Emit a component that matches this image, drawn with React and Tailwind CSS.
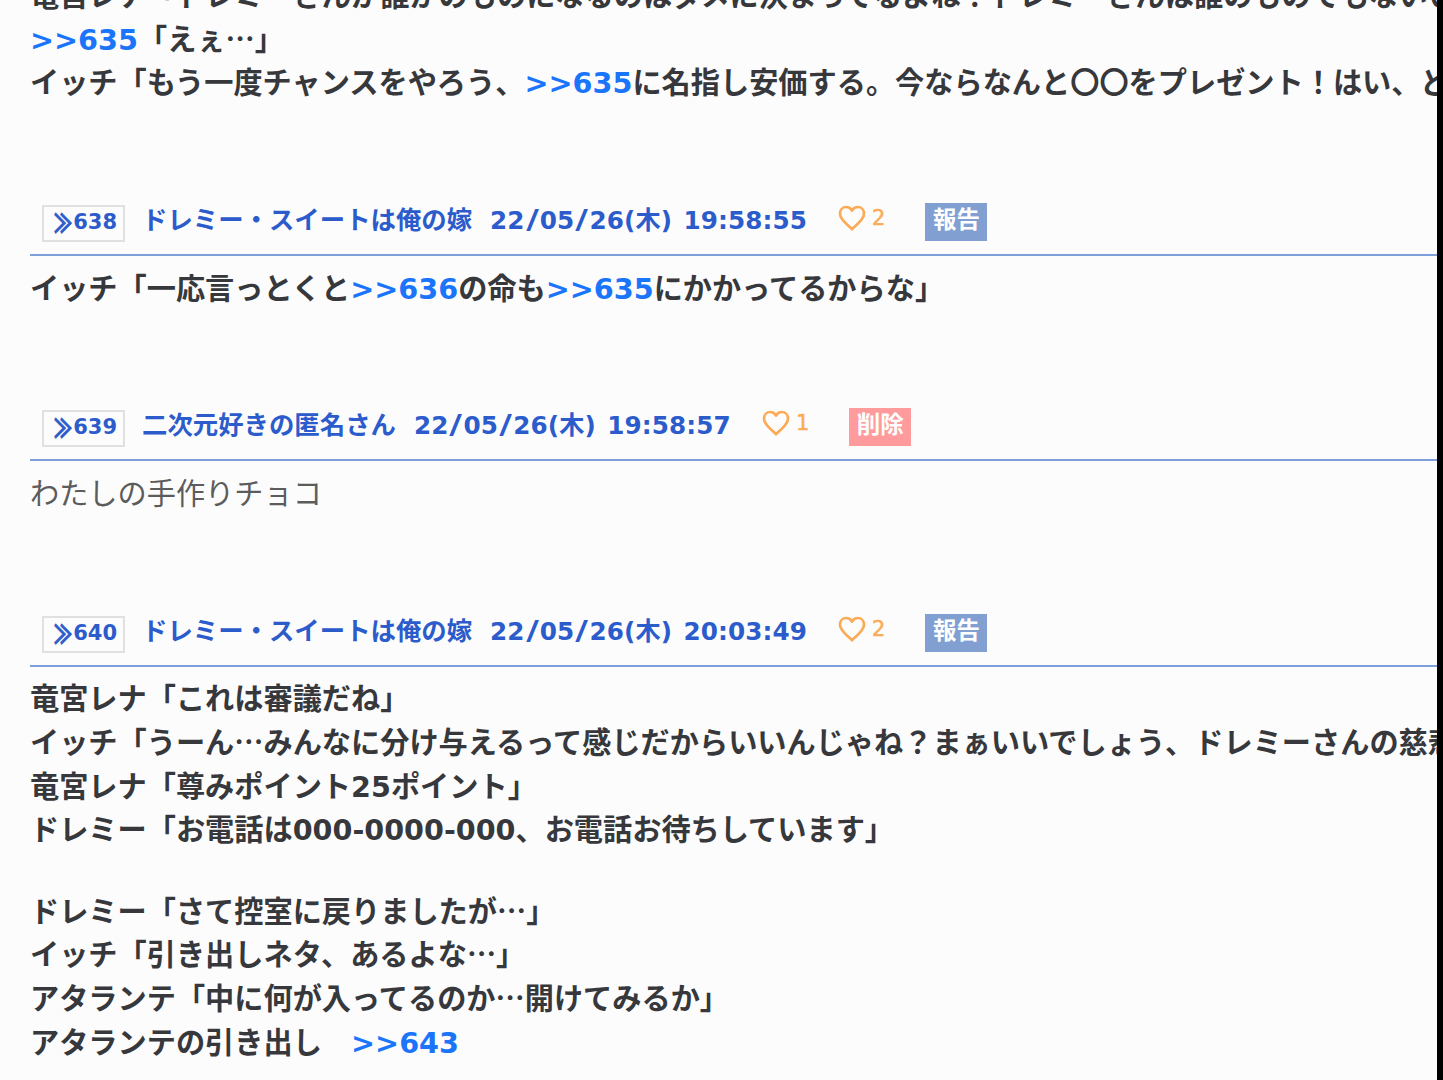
import { Fragment } from "react";

const POSTS = [
  {
    id: 638,
    name: "ドレミー・スイートは俺の嫁",
    date: "22/05/26(木) 19:58:55",
    likes: 2,
    action: "報告",
    bold: true,
    lines: ["イッチ「一応言っとくと>>636の命も>>635にかかってるからな」"],
  },
  {
    id: 639,
    name: "二次元好きの匿名さん",
    date: "22/05/26(木) 19:58:57",
    likes: 1,
    action: "削除",
    bold: false,
    lines: ["わたしの手作りチョコ"],
  },
  {
    id: 640,
    name: "ドレミー・スイートは俺の嫁",
    date: "22/05/26(木) 20:03:49",
    likes: 2,
    action: "報告",
    bold: true,
    lines: [
      "竜宮レナ「これは審議だね」",
      "イッチ「うーん…みんなに分け与えるって感じだからいいんじゃね？まぁいいでしょう、ドレミーさんの慈悲",
      "竜宮レナ「尊みポイント25ポイント」",
      "ドレミー「お電話は000-0000-000、お電話お待ちしています」",
      "",
      "ドレミー「さて控室に戻りましたが…」",
      "イッチ「引き出しネタ、あるよな…」",
      "アタランテ「中に何が入ってるのか…開けてみるか」",
      "アタランテの引き出し　>>643",
    ],
  },
];

const PREVIOUS = [
  "竜宮レナ「ドレミーさんが誰かのものになるのはダメに決まってるよね？ドレミーさんは誰のものでもないい",
  ">>635「えぇ…」",
  "イッチ「もう一度チャンスをやろう、>>635に名指し安価する。今ならなんと〇〇をプレゼント！はい、ど",
];

// Latin runs use a wider face than the kana, anchors (>>123) are links
function RichText({ text }) {
  return text.split(/(>>\d+|\/|[\d\-:()]+)/).map((part, i) => {
    if (part.startsWith(">>")) {
      return (
        <a key={i} href="#" className="font-['DejaVu_Sans',sans-serif] text-[28.7px] text-[#1a75fa]">
          {part}
        </a>
      );
    }
    if (i % 2 === 1) {
      return (
        <span
          key={i}
          className={`font-['DejaVu_Sans',sans-serif] text-[0.98em] ${
            part === "/" ? "inline-block px-[3px] scale-x-140 scale-y-105" : ""
          }`}
        >
          {part}
        </span>
      );
    }
    return <Fragment key={i}>{part}</Fragment>;
  });
}

function Lines({ lines, bold }) {
  return (
    <div className={bold ? "font-bold text-[#36383c]" : "font-normal text-[#5c5c5c]"}>
      {lines.map((line, i) =>
        line ? (
          <p key={i} className="h-[43.7px] leading-[43.7px] text-[29.2px] whitespace-nowrap">
            <RichText text={line} />
          </p>
        ) : (
          <div key={i} className="h-[37.5px]" />
        )
      )}
    </div>
  );
}

function Heart() {
  return (
    <svg viewBox="0 0 28 26" className="w-7 h-[26px]" fill="none" stroke="#fbab55" strokeWidth="2.7" strokeLinejoin="round">
      <path d="M14 24.2 C10 20.2 2 14.5 2 8.7 C2 4.8 4.7 2 8.2 2 C10.8 2 12.8 3.4 14 5.5 C15.2 3.4 17.2 2 19.8 2 C23.3 2 26 4.8 26 8.7 C26 14.5 18 20.2 14 24.2 Z" />
    </svg>
  );
}

function PostHeader({ post }) {
  return (
    <header className="flex items-start h-14 pl-3 pt-[3px] border-b-2 border-[#7f9fdb] font-bold text-[#2c5ccb] whitespace-nowrap">
      <a
        href="#"
        className="flex items-center justify-end w-[83px] h-[37px] mt-0.5 pr-[6px] pb-px border-2 border-[#e0e0e0] text-[21px]"
      >
        <span className="inline-block text-[20px] scale-x-90 scale-y-130 [-webkit-text-stroke:0.7px_#2c5ccb]">≫</span>
        <span className="font-['DejaVu_Sans',sans-serif]">{post.id}</span>
      </a>
      <span className="ml-[17px] text-[25.4px] leading-[31px]">{post.name}</span>
      <span className="ml-[18px] text-[25.2px] leading-[31px] tracking-[0.1px] [word-spacing:5.5px]">
        <RichText text={post.date} />
      </span>
      <span className="flex items-start ml-[31px] mt-0.5 text-[#fbab55]">
        <Heart />
        <span className="ml-[6px] font-['DejaVu_Sans',sans-serif] font-normal text-[21px] leading-[26px] [-webkit-text-stroke:0.5px_#fbab55]">
          {post.likes}
        </span>
      </span>
      <button
        className={`ml-[40px] w-[62px] h-[38px] pb-[7px] text-[23.5px] leading-[31px] text-white ${
          post.action === "削除" ? "bg-[#ff9b9c]" : "bg-[#819fd1]"
        }`}
      >
        {post.action}
      </button>
    </header>
  );
}

export default function App() {
  return (
    <div className="flex h-screen overflow-hidden bg-[#fdfcfd] font-['Noto_Sans_CJK_JP',sans-serif]">
      <main className="flex-1 min-w-0 overflow-hidden pl-[30px]">
        <div className="-mt-[28.1px] flex flex-col gap-[96.8px]">
          <Lines lines={PREVIOUS} bold />
          {POSTS.map((post) => (
            <article key={post.id}>
              <PostHeader post={post} />
              <div className="pt-[8.9px]">
                <Lines lines={post.lines} bold={post.bold} />
              </div>
            </article>
          ))}
        </div>
      </main>
      <div className="w-[6px] shrink-0 bg-black" />
    </div>
  );
}
